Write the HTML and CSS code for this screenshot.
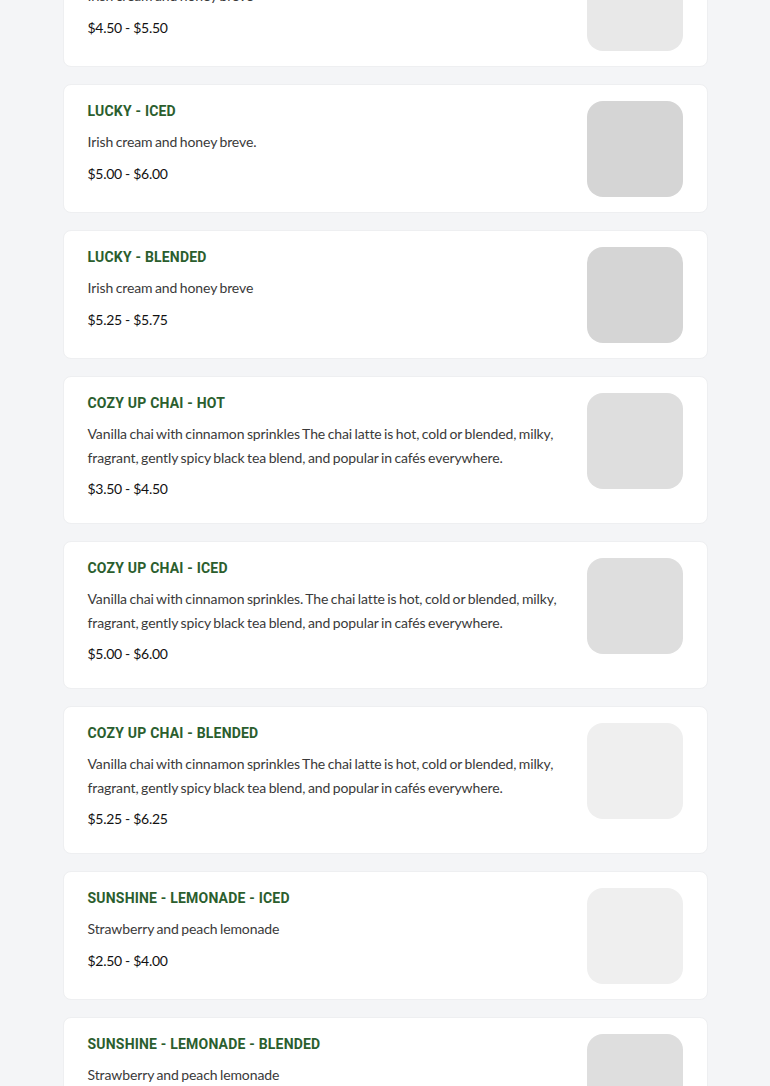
FILE: index.html
```html
<!DOCTYPE html>
<html lang="en">
<head>
  <meta charset="UTF-8">
  <title>Menu</title>
  <link rel="stylesheet" href="styles.css">
</head>
<body>

  <div class="menu">

    <div class="item">
      <div class="info">
        <h3>Lucky - Hot</h3>
        <p class="desc">Irish cream and honey breve</p>
        <p class="price">$4.50 - $5.50</p>
      </div>
      <div class="thumb shade-2"></div>
    </div>

    <div class="item">
      <div class="info">
        <h3>Lucky - Iced</h3>
        <p class="desc">Irish cream and honey breve.</p>
        <p class="price">$5.00 - $6.00</p>
      </div>
      <div class="thumb shade-4"></div>
    </div>

    <div class="item">
      <div class="info">
        <h3>Lucky - Blended</h3>
        <p class="desc">Irish cream and honey breve</p>
        <p class="price">$5.25 - $5.75</p>
      </div>
      <div class="thumb shade-4"></div>
    </div>

    <div class="item">
      <div class="info">
        <h3>Cozy Up Chai - Hot</h3>
        <p class="desc">Vanilla chai with cinnamon sprinkles The chai latte is hot, cold or blended, milky, fragrant, gently spicy black tea blend, and popular in cafés everywhere.</p>
        <p class="price">$3.50 - $4.50</p>
      </div>
      <div class="thumb shade-3"></div>
    </div>

    <div class="item">
      <div class="info">
        <h3>Cozy Up Chai - Iced</h3>
        <p class="desc">Vanilla chai with cinnamon sprinkles. The chai latte is hot, cold or blended, milky, fragrant, gently spicy black tea blend, and popular in cafés everywhere.</p>
        <p class="price">$5.00 - $6.00</p>
      </div>
      <div class="thumb shade-3"></div>
    </div>

    <div class="item">
      <div class="info">
        <h3>Cozy Up Chai - Blended</h3>
        <p class="desc">Vanilla chai with cinnamon sprinkles The chai latte is hot, cold or blended, milky, fragrant, gently spicy black tea blend, and popular in cafés everywhere.</p>
        <p class="price">$5.25 - $6.25</p>
      </div>
      <div class="thumb shade-1"></div>
    </div>

    <div class="item">
      <div class="info">
        <h3>Sunshine - Lemonade - Iced</h3>
        <p class="desc">Strawberry and peach lemonade</p>
        <p class="price">$2.50 - $4.00</p>
      </div>
      <div class="thumb shade-1"></div>
    </div>

    <div class="item">
      <div class="info">
        <h3>Sunshine - Lemonade - Blended</h3>
        <p class="desc">Strawberry and peach lemonade</p>
        <p class="price">$3.00 - $4.50</p>
      </div>
      <div class="thumb shade-3"></div>
    </div>

  </div>

</body>
</html>
```

FILE: styles.css
```css
body {
  margin: 0;
  background: #f4f5f7;
  font-family: Lato, "Noto Sans", sans-serif;
  color: #333;
  overflow: hidden;
}

.menu {
  max-width: 645px;
  margin: -62px auto 0;
  display: flex;
  flex-direction: column;
  gap: 17px;
}

.item {
  display: flex;
  align-items: flex-start;
  gap: 24px;
  background: #fff;
  border: 1px solid #eeeff1;
  border-radius: 8px;
  padding: 16px 24px 15px;
}

.info {
  flex: 1;
  padding-bottom: 7px;
}

.info h3 {
  margin: 0;
  font-family: Roboto, sans-serif;
  font-size: 14px;
  line-height: 20px;
  font-weight: 700;
  letter-spacing: 0.2px;
  text-transform: uppercase;
  color: #2b5e2e;
}

.desc {
  margin: 9px 0 0;
  font-size: 14px;
  line-height: 23.5px;
  letter-spacing: -0.1px;
  word-spacing: -1px;
  color: #3a3a3a;
}

.price {
  margin: 8px 0 0;
  font-size: 14px;
  line-height: 24px;
  letter-spacing: -0.3px;
  color: #111;
}

.thumb {
  flex: none;
  width: 96px;
  height: 96px;
  border-radius: 16px;
}

.shade-1 { background: #efefef; }
.shade-2 { background: #e8e8e8; }
.shade-3 { background: #dedede; }
.shade-4 { background: #d5d5d5; }
```
